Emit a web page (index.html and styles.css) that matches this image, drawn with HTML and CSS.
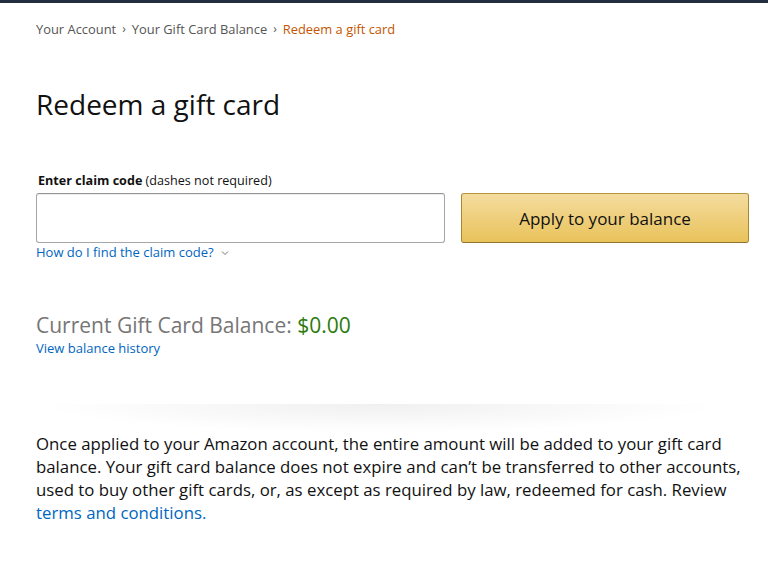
FILE: index.html
```html
<!DOCTYPE html>
<html>
<head>
<meta charset="utf-8">
<link rel="stylesheet" href="styles.css">
</head>
<body>
<div class="topbar"></div>
<main class="page">
  <nav class="crumbs">
    <a class="crumb">Your Account</a>
    <span class="sep">›</span>
    <a class="crumb">Your Gift Card Balance</a>
    <span class="sep">›</span>
    <span class="crumb current">Redeem a gift card</span>
  </nav>
  <h1 class="title">Redeem a gift card</h1>
  <div class="claim">
    <label class="label"><b>Enter claim code</b> (dashes not required)</label>
    <div class="claim-row">
      <input class="code-input" type="text">
      <button class="apply">Apply to your balance</button>
    </div>
    <a class="link help">How do I find the claim code? <svg class="chev" width="8" height="6" viewBox="0 0 8 6"><path d="M1 1.5 L4 4.5 L7 1.5" fill="none" stroke="#767676" stroke-width="1"/></svg></a>
  </div>
  <div class="balance">
    <div class="balance-line">Current Gift Card Balance: <span class="amount">$0.00</span></div>
    <a class="link small">View balance history</a>
  </div>
  <div class="divider"></div>
  <p class="note">Once applied to your Amazon account, the entire amount will be added to your gift card balance. Your gift card balance does not expire and can’t be transferred to other accounts, used to buy other gift cards, or, as except as required by law, redeemed for cash. Review <a class="link">terms and conditions.</a></p>
</main>
</body>
</html>
```
FILE: styles.css
```css
html, body { margin: 0; padding: 0; background: #fff; }
body { font-family: "Open Sans", "Noto Sans", Arial, sans-serif; color: #111; }
.topbar { height: 3px; background: #232f3e; }
.page { padding: 0 19px 0 36px; }
.crumbs { display: flex; align-items: center; gap: 6px; padding-top: 17px; font-size: 12.9px; color: #555; line-height: 18px; }
.crumb { color: #555; }
.crumb.current { color: #c45500; }
.sep { font-size: 12px; color: #555; }
.title { font-size: 28px; font-weight: 400; margin: 48px 0 0; line-height: 36px; color: #111; }
.claim { margin-top: 50px; }
.label { display: block; font-size: 12.6px; line-height: 18px; margin-left: 2px; margin-bottom: 3px; }
.claim-row { display: flex; gap: 16px; }
.code-input { box-sizing: border-box; width: 409px; flex: none; height: 50px; border: 1px solid #a6a6a6; border-top-color: #949494; border-radius: 3px; box-shadow: 0 1px 0 rgba(0,0,0,.07) inset; margin: 0; padding: 0 10px; font-size: 17px; }
.apply { box-sizing: border-box; width: 288px; flex: none; height: 50px; margin: 0; border: 1px solid; border-color: #b6953f #a88734 #8f742e; border-radius: 3px; background: linear-gradient(to bottom, #f4dc9f, #e9c25a); font-family: inherit; font-size: 17px; color: #111; cursor: pointer; }
.link { color: #0066c0; text-decoration: none; }
.help { display: flex; width: fit-content; align-items: center; gap: 7px; font-size: 13px; line-height: 16px; margin-top: 1px; }
.chev { margin-top: 1px; }
.balance { margin-top: 53px; }
.balance-line { font-size: 21px; color: #767676; line-height: 24px; }
.amount { color: #2b7a0b; }
.small { display: block; width: fit-content; font-size: 13px; line-height: 18px; margin-top: 2px; }
.divider { margin: 46px 30px 0 4px; height: 28px; background: radial-gradient(ellipse 50% 100% at 50% 0, rgba(0,0,0,.06), rgba(0,0,0,0) 100%); border-top: 1px solid transparent; }
.note { margin: 0; font-size: 16.8px; line-height: 23px; color: #111; }
```
